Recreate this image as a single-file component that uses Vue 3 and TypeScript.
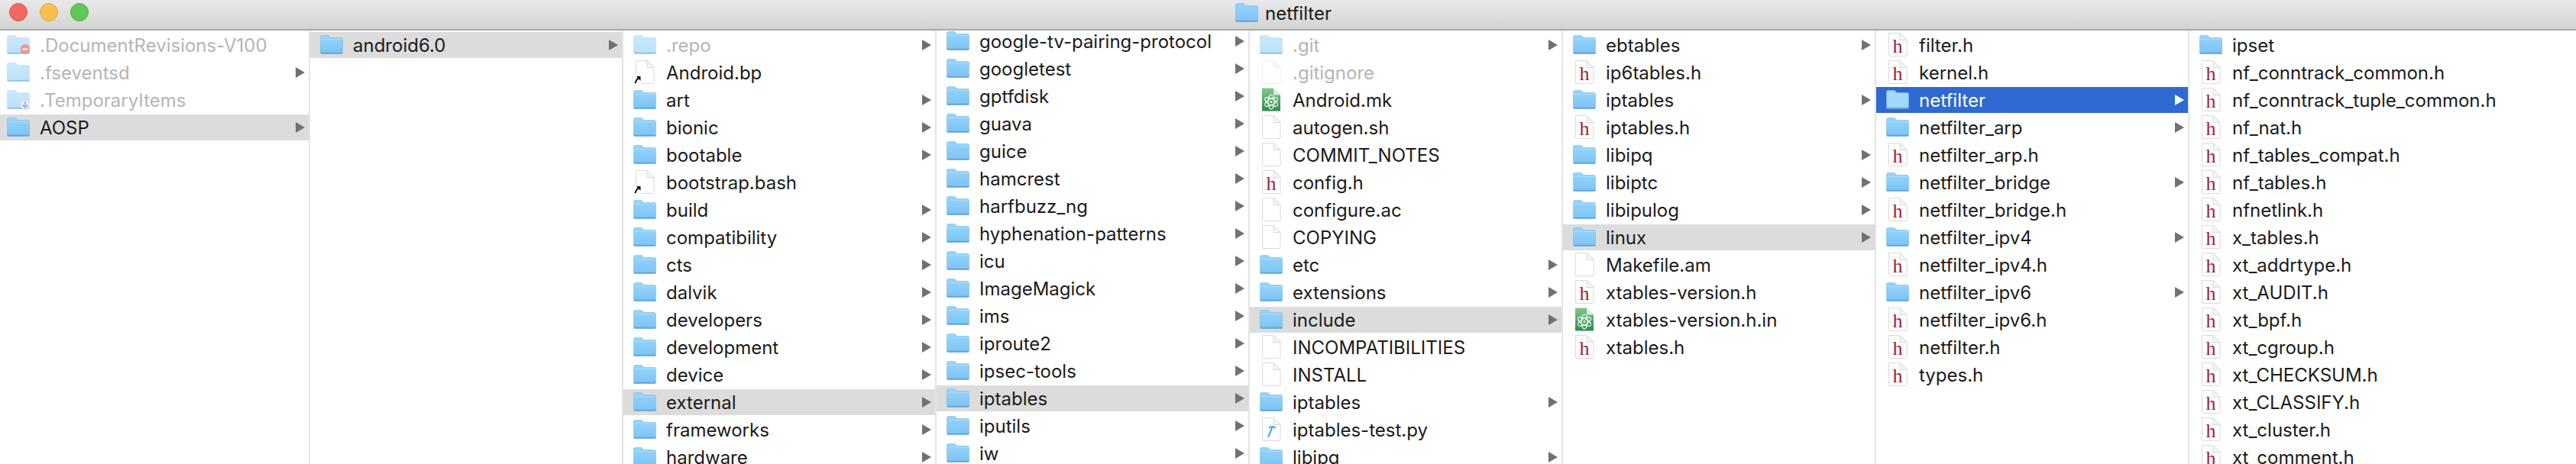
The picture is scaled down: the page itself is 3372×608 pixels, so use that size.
<script setup lang="ts">
type Kind = 'folder' | 'file' | 'h' | 'atom' | 'py' | 'link';
type Badge = 'minus' | 'down';
interface Row {
  name: string;
  kind: Kind;
  dim?: boolean;
  badge?: Badge;
  active?: boolean;
  selected?: boolean;
}

const folders = (...names: string[]): Row[] => names.map((name) => ({ name, kind: 'folder' }));
const headers = (...names: string[]): Row[] => names.map((name) => ({ name, kind: 'h' }));

const columns: { cls: string; rows: Row[] }[] = [
  {
    cls: 'first',
    rows: [
      { name: '.DocumentRevisions-V100', kind: 'folder', dim: true, badge: 'minus' },
      { name: '.fseventsd', kind: 'folder', dim: true },
      { name: '.TemporaryItems', kind: 'folder', dim: true, badge: 'down' },
      { name: 'AOSP', kind: 'folder', active: true },
    ],
  },
  { cls: '', rows: [{ name: 'android6.0', kind: 'folder', active: true }] },
  {
    cls: '',
    rows: [
      { name: '.repo', kind: 'folder', dim: true },
      { name: 'Android.bp', kind: 'link' },
      ...folders('art', 'bionic', 'bootable'),
      { name: 'bootstrap.bash', kind: 'link' },
      ...folders('build', 'compatibility', 'cts', 'dalvik', 'developers', 'development', 'device'),
      { name: 'external', kind: 'folder', active: true },
      ...folders('frameworks', 'hardware'),
    ],
  },
  {
    cls: 'scrolled',
    rows: [
      ...folders(
        'google-tv-pairing-protocol', 'googletest', 'gptfdisk', 'guava', 'guice', 'hamcrest', 'harfbuzz_ng',
        'hyphenation-patterns', 'icu', 'ImageMagick', 'ims', 'iproute2', 'ipsec-tools',
      ),
      { name: 'iptables', kind: 'folder', active: true },
      ...folders('iputils', 'iw'),
    ],
  },
  {
    cls: '',
    rows: [
      { name: '.git', kind: 'folder', dim: true },
      { name: '.gitignore', kind: 'file', dim: true },
      { name: 'Android.mk', kind: 'atom' },
      { name: 'autogen.sh', kind: 'file' },
      { name: 'COMMIT_NOTES', kind: 'file' },
      { name: 'config.h', kind: 'h' },
      { name: 'configure.ac', kind: 'file' },
      { name: 'COPYING', kind: 'file' },
      ...folders('etc', 'extensions'),
      { name: 'include', kind: 'folder', active: true },
      { name: 'INCOMPATIBILITIES', kind: 'file' },
      { name: 'INSTALL', kind: 'file' },
      { name: 'iptables', kind: 'folder' },
      { name: 'iptables-test.py', kind: 'py' },
      { name: 'libipq', kind: 'folder' },
    ],
  },
  {
    cls: '',
    rows: [
      { name: 'ebtables', kind: 'folder' },
      { name: 'ip6tables.h', kind: 'h' },
      { name: 'iptables', kind: 'folder' },
      { name: 'iptables.h', kind: 'h' },
      ...folders('libipq', 'libiptc', 'libipulog'),
      { name: 'linux', kind: 'folder', active: true },
      { name: 'Makefile.am', kind: 'file' },
      { name: 'xtables-version.h', kind: 'h' },
      { name: 'xtables-version.h.in', kind: 'atom' },
      { name: 'xtables.h', kind: 'h' },
    ],
  },
  {
    cls: '',
    rows: [
      ...headers('filter.h', 'kernel.h'),
      { name: 'netfilter', kind: 'folder', selected: true },
      { name: 'netfilter_arp', kind: 'folder' },
      { name: 'netfilter_arp.h', kind: 'h' },
      { name: 'netfilter_bridge', kind: 'folder' },
      { name: 'netfilter_bridge.h', kind: 'h' },
      { name: 'netfilter_ipv4', kind: 'folder' },
      { name: 'netfilter_ipv4.h', kind: 'h' },
      { name: 'netfilter_ipv6', kind: 'folder' },
      { name: 'netfilter_ipv6.h', kind: 'h' },
      ...headers('netfilter.h', 'types.h'),
    ],
  },
  {
    cls: 'last',
    rows: [
      { name: 'ipset', kind: 'folder' },
      ...headers(
        'nf_conntrack_common.h', 'nf_conntrack_tuple_common.h', 'nf_nat.h', 'nf_tables_compat.h', 'nf_tables.h',
        'nfnetlink.h', 'x_tables.h', 'xt_addrtype.h', 'xt_AUDIT.h', 'xt_bpf.h', 'xt_cgroup.h', 'xt_CHECKSUM.h',
        'xt_CLASSIFY.h', 'xt_cluster.h', 'xt_comment.h',
      ),
    ],
  },
];

const hasArrow = (row: Row, colIdx: number): boolean =>
  row.kind === 'folder' && !(colIdx === 0 && row.badge) && row.name !== 'ipset';
</script>

<template>
  <div class="window">
    <svg class="defs" width="0" height="0">
      <defs>
        <linearGradient id="atom-fill" x1="0" y1="0" x2="0" y2="1">
          <stop offset="0" stop-color="#82c88c" />
          <stop offset="1" stop-color="#2f8c50" />
        </linearGradient>
        <linearGradient id="folder-fill" x1="0" y1="0" x2="0" y2="1">
          <stop offset="0" stop-color="#97d5fb" />
          <stop offset="1" stop-color="#7cc3f5" />
        </linearGradient>
      </defs>
    </svg>
    <header class="titlebar">
      <div class="lights">
        <span class="light red"></span>
        <span class="light yellow"></span>
        <span class="light green"></span>
      </div>
      <div class="title">
        <svg class="icon" viewBox="0 0 30 32" width="30" height="32">
          <path class="f-body" d="M0.500 5.500Q0.500 3.500 2.500 3.500H11L14 6.500H27.500Q29.500 6.500 29.500 8.500V26Q29.500 27.500 28 27.500H2Q0.500 27.500 0.500 26Z" />
          <path class="f-edge" d="M0.500 25.800H29.500V26Q29.500 27.500 28 27.500H2Q0.500 27.500 0.500 26Z" />
        </svg>
        <span>netfilter</span>
      </div>
    </header>

    <main class="browser">
      <section v-for="(col, c) in columns" :key="c" class="column" :class="col.cls">
        <div
          v-for="row in col.rows"
          :key="row.name"
          class="row"
          :class="{ dim: row.dim, active: row.active, selected: row.selected }"
        >
          <svg class="icon" viewBox="0 0 30 32" width="30" height="32">
            <template v-if="row.kind === 'folder'">
              <path class="f-body" d="M0.500 5.500Q0.500 3.500 2.500 3.500H11L14 6.500H27.500Q29.500 6.500 29.500 8.500V26Q29.500 27.500 28 27.500H2Q0.500 27.500 0.500 26Z" />
              <path class="f-line" d="M0.500 8.500H29.500" />
              <path class="f-edge" d="M0.500 25.800H29.500V26Q29.500 27.500 28 27.500H2Q0.500 27.500 0.500 26Z" />
              <g v-if="row.badge === 'minus'">
                <circle cx="24" cy="21.500" r="6.500" fill="#ea9a90" />
                <rect x="20.500" y="20.500" width="7" height="2" fill="#fff" />
              </g>
              <g v-if="row.badge === 'down'">
                <circle cx="24" cy="22" r="6.500" fill="#eef1f5" stroke="#c9ccd2" stroke-width="0.700" />
                <path d="M24 17.500V26M20.500 22.500L24 26L27.500 22.500" fill="none" stroke="#8ec2f2" stroke-width="2.200" />
              </g>
            </template>
            <template v-else-if="row.kind === 'atom'">
              <path d="M3 0.500H18L27 9.500V30.500H3Z" fill="url(#atom-fill)" />
              <path d="M18 0.500L27 9.500H18Z" fill="#d8edd9" />
              <g fill="none" stroke="#fff" stroke-width="1.100" transform="translate(15 18.500)">
                <ellipse rx="9.500" ry="4" transform="rotate(90)" />
                <ellipse rx="9.500" ry="4" transform="rotate(30)" />
                <ellipse rx="9.500" ry="4" transform="rotate(150)" />
              </g>
              <circle cx="15" cy="18.500" r="1.400" fill="#fff" />
            </template>
            <template v-else>
              <path class="sheet" d="M3.500 0.500H18L27 9.500V29.500Q27 30.500 26 30.500H4.500Q3.500 30.500 3.500 29.500Z" />
              <path class="sheet ear" d="M18 0.500V9.500H27Z" />
              <text v-if="row.kind === 'h'" class="h-mark" x="15" y="25.500" text-anchor="middle">h</text>
              <g v-if="row.kind === 'py'" fill="none" stroke="#4aa3ec" stroke-width="2">
                <path d="M11 26L16.500 12.500" />
                <path d="M12 13.500Q17 10.500 21 14" />
              </g>
              <g v-if="row.kind === 'link'">
                <rect x="0.500" y="19" width="10" height="12.500" rx="2" fill="#fff" />
                <path d="M2.500 30Q3.500 25.500 7 22.800" fill="none" stroke="#111" stroke-width="2.200" />
                <path d="M3.800 21H9.500V27Z" fill="#111" />
              </g>
            </template>
          </svg>
          <span class="name">{{ row.name }}</span>
          <svg v-if="hasArrow(row, c)" class="arrow" viewBox="0 0 12 14" width="12" height="14">
            <path d="M0 0L12 7L0 14Z" />
          </svg>
        </div>
      </section>
    </main>
  </div>
</template>

<style scoped>
.window {
  width: 3372px;
  height: 608px;
  overflow: hidden;
  background: #fff;
  color: #1b1b1b;
  font-family: Inter, "Liberation Sans", Arial, sans-serif;
  font-size: 24px;
  display: flex;
  flex-direction: column;
}
.defs { flex: none; }
.titlebar {
  height: 38px;
  flex: none;
  display: flex;
  align-items: center;
  background: linear-gradient(#e9e9eb, #d3d3d3);
  border-bottom: 2px solid #a9a9a9;
}
.lights {
  width: 1617px;
  flex: none;
  padding-left: 12px;
  box-sizing: border-box;
  display: flex;
  gap: 16px;
  margin-top: -6px;
}
.light {
  width: 24px;
  height: 24px;
  border-radius: 50%;
  box-sizing: border-box;
  border: 1px solid;
}
.red { background: #ee6a5f; border-color: #d9574c; }
.yellow { background: #f6bf50; border-color: #dfa53c; }
.green { background: #63c756; border-color: #4fab43; }
.title {
  display: flex;
  align-items: center;
  gap: 9px;
  margin-top: -4px;
}
.browser {
  flex: 1;
  min-height: 0;
  display: flex;
}
.column {
  width: 408px;
  flex: none;
  padding-top: 2px;
  overflow: hidden;
  border-right: 2px solid #e4e4e4;
}
.column.first { width: 404px; }
.column.last { flex: 1; border-right: 0; }
.column.scrolled { padding-top: 0; }
.column.scrolled .row:first-child { margin-top: -3px; }
.row {
  height: 34px;
  margin-bottom: 2px;
  display: flex;
  align-items: center;
  padding: 0 5px 0 13px;
  white-space: nowrap;
}
.first .row { padding-left: 9px; }
.icon { flex: none; }
.name { margin-left: 13px; flex: 1; }
.arrow { flex: none; fill: #717171; }
.row.dim .name { color: #b5b5b5; }
.row.active { background: #dcdcdc; }
.row.selected { background: #2f69d2; color: #fff; }
.row.selected .arrow { fill: #fff; }
.f-body { fill: url(#folder-fill); stroke: #7ab9e6; stroke-width: 0.6; }
.f-line { stroke: #aee0fc; stroke-width: 0.8; fill: none; }
.f-edge { fill: #62a6d6; }
.row.dim .f-body, .row.dim .f-edge, .row.dim .f-line { opacity: 0.5; }
.row.selected .f-body { fill: #a3d8fa; }
.sheet { fill: #fff; stroke: #dadada; }
.sheet.ear { fill: #f6f6f6; }
.row.dim .sheet { stroke: #ececec; }
.h-mark {
  font-family: "Liberation Serif", "DejaVu Serif", serif;
  font-size: 26px;
  fill: #9c2339;
}
</style>
